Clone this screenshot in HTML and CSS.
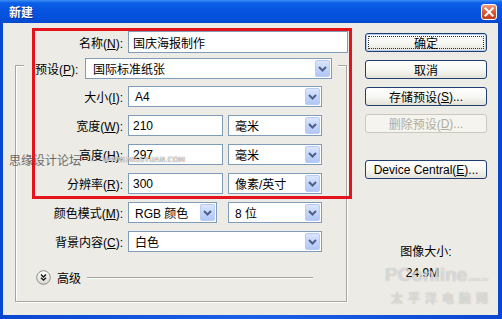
FILE: index.html
```html
<!DOCTYPE html>
<html lang="zh-CN">
<head>
    <meta charset="UTF-8">
    <title>新建</title>
    <link rel="stylesheet" href="styles.css">
</head>
<body>

    <div class="window">
        <div class="titlebar">
            <span class="title">新建</span>
            <span class="close">
                <svg width="16" height="16" viewBox="0 0 16 16">
                    <defs>
                        <linearGradient id="cg" x1="0" y1="0" x2="0" y2="1">
                            <stop offset="0" stop-color="#f0a486"/>
                            <stop offset="0.5" stop-color="#dc5a35"/>
                            <stop offset="1" stop-color="#c23a18"/>
                        </linearGradient>
                    </defs>
                    <rect x="0.5" y="0.5" width="15" height="15" rx="2.5" fill="url(#cg)" stroke="#fff"/>
                    <path d="M4.5 4.5 L11.5 11.5 M11.5 4.5 L4.5 11.5" stroke="#fff" stroke-width="2" stroke-linecap="square"/>
                </svg>
            </span>
        </div>

        <div class="content">
            <div class="main">
                <div class="row name-row">
                    <label class="lbl">名称(<u>N</u>):</label>
                    <div class="field name">国庆海报制作</div>
                </div>

                <div class="group">
                    <div class="legend">
                        <label>预设(<u>P</u>):</label>
                        <div class="combo preset">
                            <span>国际标准纸张</span>
                            <i class="drop"><svg width="9" height="6" viewBox="0 0 9 6"><path d="M1 1 L4.5 4.5 L8 1" fill="none" stroke="#4d6185" stroke-width="2"/></svg></i>
                        </div>
                    </div>

                    <div class="rows">
                        <div class="row">
                            <label class="lbl">大小(<u>I</u>):</label>
                            <div class="combo full">
                                <span>A4</span>
                                <i class="drop"><svg width="9" height="6" viewBox="0 0 9 6"><path d="M1 1 L4.5 4.5 L8 1" fill="none" stroke="#4d6185" stroke-width="2"/></svg></i>
                            </div>
                        </div>
                        <div class="row">
                            <label class="lbl">宽度(<u>W</u>):</label>
                            <div class="field num">210</div>
                            <div class="combo unit">
                                <span>毫米</span>
                                <i class="drop"><svg width="9" height="6" viewBox="0 0 9 6"><path d="M1 1 L4.5 4.5 L8 1" fill="none" stroke="#4d6185" stroke-width="2"/></svg></i>
                            </div>
                        </div>
                        <div class="row">
                            <label class="lbl">高度(<u>H</u>):</label>
                            <div class="field num">297</div>
                            <div class="combo unit">
                                <span>毫米</span>
                                <i class="drop"><svg width="9" height="6" viewBox="0 0 9 6"><path d="M1 1 L4.5 4.5 L8 1" fill="none" stroke="#4d6185" stroke-width="2"/></svg></i>
                            </div>
                        </div>
                        <div class="row">
                            <label class="lbl">分辨率(<u>R</u>):</label>
                            <div class="field num">300</div>
                            <div class="combo unit">
                                <span>像素/英寸</span>
                                <i class="drop"><svg width="9" height="6" viewBox="0 0 9 6"><path d="M1 1 L4.5 4.5 L8 1" fill="none" stroke="#4d6185" stroke-width="2"/></svg></i>
                            </div>
                        </div>
                        <div class="row">
                            <label class="lbl">颜色模式(<u>M</u>):</label>
                            <div class="combo mode">
                                <span>RGB 颜色</span>
                                <i class="drop"><svg width="9" height="6" viewBox="0 0 9 6"><path d="M1 1 L4.5 4.5 L8 1" fill="none" stroke="#4d6185" stroke-width="2"/></svg></i>
                            </div>
                            <div class="combo unit bits">
                                <span>8 位</span>
                                <i class="drop"><svg width="9" height="6" viewBox="0 0 9 6"><path d="M1 1 L4.5 4.5 L8 1" fill="none" stroke="#4d6185" stroke-width="2"/></svg></i>
                            </div>
                        </div>
                        <div class="row">
                            <label class="lbl">背景内容(<u>C</u>):</label>
                            <div class="combo full">
                                <span>白色</span>
                                <i class="drop"><svg width="9" height="6" viewBox="0 0 9 6"><path d="M1 1 L4.5 4.5 L8 1" fill="none" stroke="#4d6185" stroke-width="2"/></svg></i>
                            </div>
                        </div>
                    </div>

                    <div class="advanced">
                        <svg width="15" height="15" viewBox="0 0 15 15">
                            <defs>
                                <linearGradient id="ag" x1="0" y1="0" x2="0" y2="1">
                                    <stop offset="0" stop-color="#ffffff"/>
                                    <stop offset="1" stop-color="#d8d8d2"/>
                                </linearGradient>
                            </defs>
                            <circle cx="7.5" cy="7.5" r="6.8" fill="url(#ag)" stroke="#8c8c86"/>
                            <path d="M5 4.5 L7.5 7 L10 4.5 M5 7.7 L7.5 10.2 L10 7.7" fill="none" stroke="#111" stroke-width="1.3"/>
                        </svg>
                        <span class="adv-text">高级</span>
                        <span class="adv-line"></span>
                    </div>
                </div>
            </div>

            <div class="side">
                <div class="btn default">确定</div>
                <div class="btn">取消</div>
                <div class="btn">存储预设(<u>S</u>)...</div>
                <div class="btn disabled">删除预设(<u>D</u>)...</div>
                <div class="btn device">Device Central(<u>E</u>)...</div>
                <div class="info">
                    <div class="info-label">图像大小:</div>
                    <div class="info-value">24.9M</div>
                </div>
            </div>
        </div>

        <!-- marks laid over the screenshot -->
        <div class="mark-red"></div>
        <div class="mark-missyuan">思缘设计论坛</div>
        <div class="mark-url">WWW.MISSYUAN.COM</div>
        <div class="mark-pc">
            <div class="pc-logo">PConline<small>.com.cn</small></div>
            <div class="pc-name">太平洋电脑网</div>
        </div>
    </div>

</body>
</html>
```

FILE: styles.css
```css
* {
    box-sizing: border-box;
}

body {
    margin: 0;
    font-family: "Liberation Sans", "Noto Sans CJK SC", sans-serif;
    font-size: 12px;
    color: #000;
}

u {
    text-underline-offset: 1px;
}

.window {
    position: relative;
    width: 502px;
    height: 319px;
    display: flex;
    flex-direction: column;
    background: linear-gradient(90deg, #0a47d0, #1a60e6 50%, #0a47d0);
    overflow: hidden;
}

.titlebar {
    height: 23px;
    display: flex;
    align-items: center;
    justify-content: space-between;
    padding: 0 5px 0 9px;
    background: linear-gradient(#3d8ef7 0, #0b5fe6 3px, #0655e0 45%, #0450db 80%, #0349cc 100%);
}

.title {
    color: #fff;
    font-family: "Noto Sans CJK SC", sans-serif;
    font-weight: 700;
    font-size: 12px;
    text-shadow: 1px 1px 0 #0a2a8a;
}

.close {
    display: flex;
    margin-top: 1px;
}

.content {
    flex: 1;
    margin: 0 4px 4px 3px;
    background: #ecebe5;
    display: flex;
}

.main {
    margin-left: 12px;
    width: 333px;
    padding-top: 8px;
}

.row {
    display: flex;
    align-items: center;
    height: 21px;
}

.name-row {
    height: 22px;
}

.lbl {
    width: 113px;
    text-align: right;
    padding-right: 5px;
    white-space: nowrap;
}

.group .lbl {
    width: 112px;
}

.field,
.combo {
    height: 100%;
    display: flex;
    align-items: center;
    background: #fff;
    border: 1px solid #7f9db9;
    white-space: nowrap;
}

.field {
    padding-left: 4px;
}

.field.name {
    width: 220px;
}

.field.num {
    width: 95px;
    margin-right: 5px;
}

.combo {
    padding-left: 6px;
    padding-right: 1px;
}

.combo .drop {
    margin-left: auto;
    width: 15px;
    height: 17px;
    display: flex;
    align-items: center;
    justify-content: center;
    border: 1px solid #b8cbf3;
    border-radius: 2px;
    background: linear-gradient(#dbe6fd, #c3d5fb 50%, #b2c7f6);
}

.combo.full {
    width: 194px;
}

.combo.unit {
    width: 94px;
}

.combo.mode {
    width: 89px;
}

.combo.bits {
    margin-left: 11px;
}

.group {
    margin-top: 12px;
    width: 332px;
    border: 1px solid #a6a59e;
    box-shadow: inset 1px 1px 0 #fff, 1px 1px 0 #fff;
    padding-bottom: 16px;
}

.legend {
    margin: -8px 0 0 8px;
    width: 314px;
    height: 21px;
    display: flex;
    align-items: center;
    padding: 0 6px 0 11px;
    background: #ecebe5;
}

.combo.preset {
    margin-left: auto;
    width: 247px;
    padding-left: 7px;
}

.rows {
    margin-top: 7px;
    display: flex;
    flex-direction: column;
    gap: 8px;
}

.advanced {
    margin-top: 18px;
    padding-left: 20px;
    height: 15px;
    display: flex;
    align-items: center;
}

.adv-text {
    margin-left: 6px;
}

.adv-line {
    margin-left: 6px;
    width: 226px;
    height: 2px;
    border-top: 1px solid #a3a29b;
    border-bottom: 1px solid #fff;
}

.side {
    margin-left: 17px;
    width: 122px;
    padding-top: 10px;
    display: flex;
    flex-direction: column;
    gap: 8px;
}

.btn {
    height: 19px;
    display: flex;
    align-items: center;
    justify-content: center;
    border: 1px solid #1f3f6f;
    border-radius: 3px;
    background: linear-gradient(#ffffff, #f6f6f2 55%, #e4e2d8);
    white-space: nowrap;
}

.btn.default {
    box-shadow: inset 0 0 0 1px #b8cdf5;
    outline: 1px dotted #333;
    outline-offset: -4px;
}

.btn.disabled {
    border-color: #cbc9bd;
    color: #aeac9f;
    background: #f5f4ef;
}

.btn.device {
    margin-top: 19px;
}

.info {
    margin-top: 57px;
    text-align: center;
    line-height: 16px;
}

.info-value {
    margin-top: 5px;
    padding-right: 7px;
}

/* annotation and watermarks over the screenshot */
.mark-red {
    position: absolute;
    left: 32px;
    top: 28px;
    width: 320px;
    height: 171px;
    border: 3px solid #e5131b;
}

.mark-missyuan {
    position: absolute;
    left: 9px;
    top: 151px;
    font-family: "Noto Sans CJK SC", sans-serif;
    font-size: 12px;
    color: #555;
    opacity: 0.85;
}

.mark-url {
    position: absolute;
    left: 103px;
    top: 156px;
    font-family: "DejaVu Sans", sans-serif;
    font-size: 7px;
    letter-spacing: 0.3px;
    color: #fff;
    text-shadow: 0 0 1px #555, 0 0 1px #555;
    opacity: 0.9;
}

.mark-pc {
    position: absolute;
    left: 385px;
    top: 263px;
    width: 114px;
    color: rgba(255, 255, 255, 0.55);
    white-space: nowrap;
}

.pc-logo {
    font-family: "Liberation Sans", sans-serif;
    font-size: 19px;
    font-weight: 700;
    line-height: 24px;
    text-shadow: 0 0 1px rgba(120, 120, 120, 0.6);
}

.pc-logo small {
    font-size: 6px;
    font-weight: 400;
}

.pc-name {
    margin-left: 6px;
    font-family: "Noto Sans CJK SC", sans-serif;
    font-size: 12px;
    font-weight: 700;
    letter-spacing: 5px;
    line-height: 14px;
    text-shadow: 0 0 1px rgba(120, 120, 120, 0.6);
}
```
